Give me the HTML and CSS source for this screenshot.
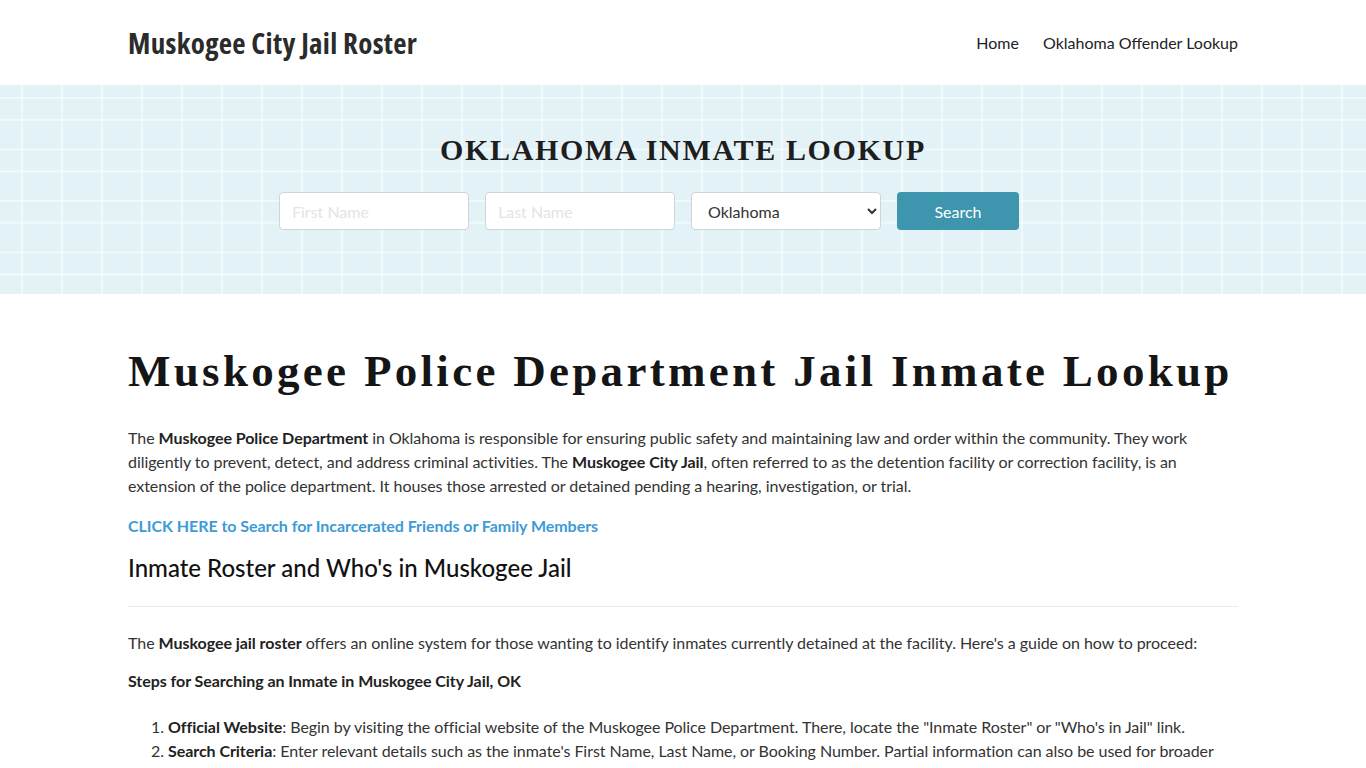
FILE: index.html
```html
<!DOCTYPE html>
<html lang="en">
<head>
<meta charset="utf-8">
<title>Muskogee City Jail Roster</title>
<link rel="stylesheet" href="styles.css">
</head>
<body>
<header class="site-header">
  <div class="container header-inner">
    <a class="logo" href="#">Muskogee City Jail Roster</a>
    <nav class="nav">
      <a href="#">Home</a>
      <a href="#">Oklahoma Offender Lookup</a>
    </nav>
  </div>
</header>
<section class="banner">
  <div class="container">
    <h2 class="banner-title">OKLAHOMA INMATE LOOKUP</h2>
    <form class="search-form">
      <input type="text" placeholder="First Name">
      <input type="text" placeholder="Last Name">
      <select>
        <option>Oklahoma</option>
      </select>
      <button type="button">Search</button>
    </form>
  </div>
</section>
<main class="container content">
  <h1 class="page-title">Muskogee Police Department Jail Inmate Lookup</h1>
  <p>The <strong>Muskogee Police Department</strong> in Oklahoma is responsible for ensuring public safety and maintaining law and order within the community. They work diligently to prevent, detect, and address criminal activities. The <strong>Muskogee City Jail</strong>, often referred to as the detention facility or correction facility, is an extension of the police department. It houses those arrested or detained pending a hearing, investigation, or trial.</p>
  <p class="cta-line"><a class="cta" href="#">CLICK HERE to Search for Incarcerated Friends or Family Members</a></p>
  <h2 class="section-title">Inmate Roster and Who's in Muskogee Jail</h2>
  <hr class="divider">
  <p class="intro">The <strong>Muskogee jail roster</strong> offers an online system for those wanting to identify inmates currently detained at the facility. Here's a guide on how to proceed:</p>
  <p><strong>Steps for Searching an Inmate in Muskogee City Jail, OK</strong></p>
  <ol class="steps">
    <li><strong>Official Website</strong>: Begin by visiting the official website of the Muskogee Police Department. There, locate the "Inmate Roster" or "Who's in Jail" link.</li>
    <li><strong>Search Criteria</strong>: Enter relevant details such as the inmate's First Name, Last Name, or Booking Number. Partial information can also be used for broader results.</li>
  </ol>
</main>
</body>
</html>
```

FILE: styles.css
```css
* { box-sizing: border-box; }
html, body { margin: 0; padding: 0; }
body {
  font-family: Lato, "Noto Sans", sans-serif;
  font-size: 16px;
  line-height: 24px;
  color: #333;
  background: #fff;
}
a { text-decoration: none; }
.container {
  width: 1110px;
  margin: 0 auto;
}
.site-header { height: 85px; background: #fff; }
.header-inner {
  height: 85px;
  display: flex;
  align-items: center;
  justify-content: space-between;
}
.logo {
  font-family: "Open Sans", "DejaVu Sans Condensed", sans-serif;
  font-stretch: 75%;
  font-variation-settings: "wdth" 75;
  font-weight: 700;
  font-size: 29px;
  color: #2b2b2b;
  letter-spacing: 0.3px;
  margin-top: 1px;
}
.nav { display: flex; gap: 24px; }
.nav a { color: #222; font-size: 16px; }

.banner {
  height: 209px;
  background-color: #e3f2f7;
  background-image:
    linear-gradient(90deg, rgba(255,255,255,0.5) 0, rgba(255,255,255,0.5) 2px, transparent 2px),
    linear-gradient(180deg, rgba(255,255,255,0.5) 0, rgba(255,255,255,0.5) 2px, transparent 2px, transparent 22px, rgba(255,255,255,0.5) 22px, rgba(255,255,255,0.5) 24px, transparent 24px);
  background-size: 40px 51.5px, 40px 51.5px;
  background-position: 21px 0, 0 12px;
  padding-top: 47px;
}
.banner-title {
  margin: 0;
  text-align: center;
  font-family: "Liberation Serif", serif;
  font-weight: bold;
  font-size: 30px;
  line-height: 36px;
  letter-spacing: 1.65px;
  color: #1e1e1e;
}
.search-form {
  display: flex;
  gap: 16px;
  margin-top: 24px;
  padding-left: 151px;
}
.search-form input,
.search-form select {
  width: 190px;
  height: 38px;
  border: 1px solid #ced4da;
  border-radius: 4px;
  background: #fff;
  font-family: Lato, sans-serif;
  font-size: 16px;
  padding: 0 12px;
  color: #495057;
}
.search-form input::placeholder { color: #e4e4e4; }
.search-form select { padding-left: 12px; color: #333; }
.search-form button {
  width: 122px;
  height: 38px;
  border: 0;
  border-radius: 4px;
  background: #3d95ae;
  color: #fff;
  font-family: Lato, sans-serif;
  font-size: 16px;
}

.content { padding-top: 50px; letter-spacing: -0.05px; }
.page-title {
  margin: 0 0 28px;
  font-family: "Liberation Serif", serif;
  font-weight: bold;
  font-size: 45px;
  line-height: 54px;
  letter-spacing: 3.3px;
  color: #151515;
}
.content p { margin: 0 0 16px; }
.content .cta-line { margin-bottom: 14px; }
.content .intro { margin-bottom: 14px; }
.content strong { color: #222; }
.cta { color: #3e9bd5; font-weight: bold; }
.section-title {
  margin: 0;
  font-family: Lato, sans-serif;
  font-weight: 500;
  font-size: 24px;
  line-height: 32px;
  letter-spacing: 0;
  color: #111;
}
.divider {
  border: 0;
  border-top: 1px solid #e9e9e9;
  margin: 22px 0 24px;
}
.steps { margin: 22px 0 0; padding-left: 40px; }
.steps li { margin: 0; }
```
